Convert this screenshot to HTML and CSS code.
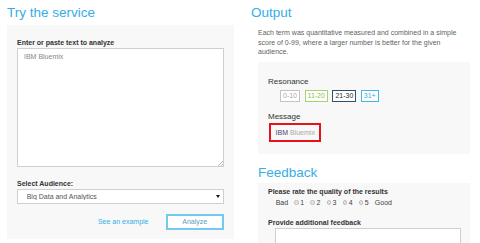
FILE: index.html
```html
<!DOCTYPE html>
<html lang="en">
<head>
<meta charset="utf-8">
<title>Try the service</title>
<link rel="stylesheet" href="styles.css">
</head>
<body>
<div class="page">
  <section class="col col-left">
    <h2 class="title">Try the service</h2>
    <div class="panel panel-try">
      <label class="label" for="txt">Enter or paste text to analyze</label>
      <div class="ta-wrap">
        <textarea id="txt" class="textarea ta-main">IBM Bluemix</textarea>
        <span class="grip"></span>
      </div>
      <label class="label label-aud" for="aud">Select Audience:</label>
      <div class="select-wrap">
        <select id="aud" class="select"><option>Big Data and Analytics</option></select>
      </div>
      <div class="actions">
        <a class="link" href="#">See an example</a>
        <button class="btn" type="button">Analyze</button>
      </div>
    </div>
  </section>
  <section class="col col-right">
    <h2 class="title">Output</h2>
    <div class="indent">
      <p class="desc">Each term was quantitative measured and combined in a simple score of 0-99, where a larger number is better for the given audience.</p>
      <div class="panel panel-out">
        <div class="sub">Resonance</div>
        <div class="badges">
          <span class="badge b-gray">0-10</span>
          <span class="badge b-green">11-20</span>
          <span class="badge b-navy">21-30</span>
          <span class="badge b-blue">31+</span>
        </div>
        <div class="sub sub-msg">Message</div>
        <div class="message"><span class="hl">IBM</span> Bluemix</div>
      </div>
      <h2 class="title title-fb">Feedback</h2>
      <div class="panel panel-fb">
        <div class="label">Please rate the quality of the results</div>
        <div class="rating">
          <span>Bad</span>
          <span class="opt"><span class="radio"></span>1</span>
          <span class="opt"><span class="radio"></span>2</span>
          <span class="opt"><span class="radio"></span>3</span>
          <span class="opt"><span class="radio"></span>4</span>
          <span class="opt"><span class="radio"></span>5</span>
          <span>Good</span>
        </div>
        <div class="label label-fb">Provide additional feedback</div>
        <textarea class="textarea ta-fb"></textarea>
      </div>
    </div>
  </section>
</div>
</body>
</html>
```
FILE: styles.css
```css
* { box-sizing: border-box; }
html, body { margin: 0; padding: 0; background: #fff; }
body {
  font-family: "Liberation Sans", Arial, sans-serif;
  font-size: 7px;
  line-height: 9.8px;
  color: #555;
}
.page {
  display: flex;
  align-items: flex-start;
  gap: 17px;
  padding-left: 7px;
}
.col-left { flex: none; width: 227px; }
.col-right { flex: none; width: 219px; }
.title {
  margin: 5px 0 0;
  font-size: 13.5px;
  line-height: 16px;
  font-weight: normal;
  color: #35ade6;
}
.panel { background: #f8f8f8; }
.label {
  display: block;
  font-weight: bold;
  color: #333;
}

/* left */
.panel-try { margin-top: 4px; padding: 12.5px 10px 9px; }
.ta-wrap { position: relative; margin-top: 1px; }
.textarea {
  display: block;
  width: 100%;
  border: 1px solid #cfcfcf;
  background: #fff;
  font-family: inherit;
  font-size: 7px;
  line-height: 9.8px;
  color: #888;
  resize: none;
  outline: none;
  margin: 0;
}
.ta-main { height: 119px; padding: 2.5px 6px; }
.grip {
  position: absolute;
  right: 1px;
  bottom: 1px;
  width: 5px;
  height: 5px;
  background: linear-gradient(135deg, transparent 45%, #b5b5b5 45%, #b5b5b5 55%, transparent 55%, transparent 72%, #b5b5b5 72%, #b5b5b5 82%, transparent 82%);
}
.label-aud { margin-top: 11.5px; }
.select-wrap { position: relative; }
.select {
  display: block;
  width: 100%;
  height: 15px;
  margin: 0;
  padding: 0 0 0 8.7px;
  border: 1px solid #cfcfcf;
  border-radius: 0;
  background: #fff;
  font-family: inherit;
  font-size: 7px;
  color: #555;
  appearance: none;
  -webkit-appearance: none;
  outline: none;
}
.select-wrap::after {
  content: "";
  position: absolute;
  right: 4px;
  top: 6px;
  width: 0;
  height: 0;
  border-left: 2px solid transparent;
  border-right: 2px solid transparent;
  border-top: 3px solid #111;
}
.actions {
  display: flex;
  justify-content: flex-end;
  align-items: center;
  gap: 17px;
  margin-top: 10px;
}
.link { color: #35ade6; text-decoration: none; }
.btn {
  width: 58.5px;
  height: 16.7px;
  margin: 0;
  padding: 0;
  border: 2px solid #74c9ef;
  background: #fff;
  font-family: inherit;
  font-size: 7px;
  color: #5a9cc4;
}

/* right */
.indent { margin-left: 7px; }
.desc { margin: 6.8px 0 0; color: #5f5f5f; }
.panel-out { margin-top: 4.8px; padding: 14px 10px 12px; }
.sub { font-size: 8px; line-height: 11.2px; color: #333; }
.badges {
  display: flex;
  gap: 4.5px;
  margin: 2.8px 0 0 12px;
}
.badge {
  border: 1px solid #bbb;
  background: #fff;
  padding: 0 2px;
  line-height: 9.8px;
}
.b-gray { border-color: #c4c4c4; color: #aaa; }
.b-green { border-color: #a6d36b; color: #86bd50; }
.b-navy { border-color: #2e4f6e; color: #2b2b2b; }
.b-blue { border-color: #3db9ee; color: #35a9e1; }
.sub-msg { margin-top: 9.3px; }
.message {
  width: fit-content;
  margin: 1px 0 0 1px;
  padding: 2.6px 4.6px;
  border: 2px solid #e8111b;
  color: #aaa;
}
.hl { color: #4e4670; }
.title-fb { margin-top: 10.3px; }
.panel-fb { margin-top: 2.7px; padding: 4px 10px 10px; }
.rating {
  display: flex;
  align-items: center;
  gap: 6.2px;
  margin-top: 0.6px;
  padding-left: 7.7px;
  color: #444;
}
.opt { display: inline-flex; align-items: center; gap: 1.5px; }
.radio {
  width: 4.5px;
  height: 4.5px;
  border-radius: 50%;
  border: 1px solid #bdbdbd;
  background: #e4e4e4;
}
.label-fb { margin-top: 10.7px; }
.ta-fb {
  margin-left: 7px;
  width: 185.7px;
  height: 40px;
}
```
